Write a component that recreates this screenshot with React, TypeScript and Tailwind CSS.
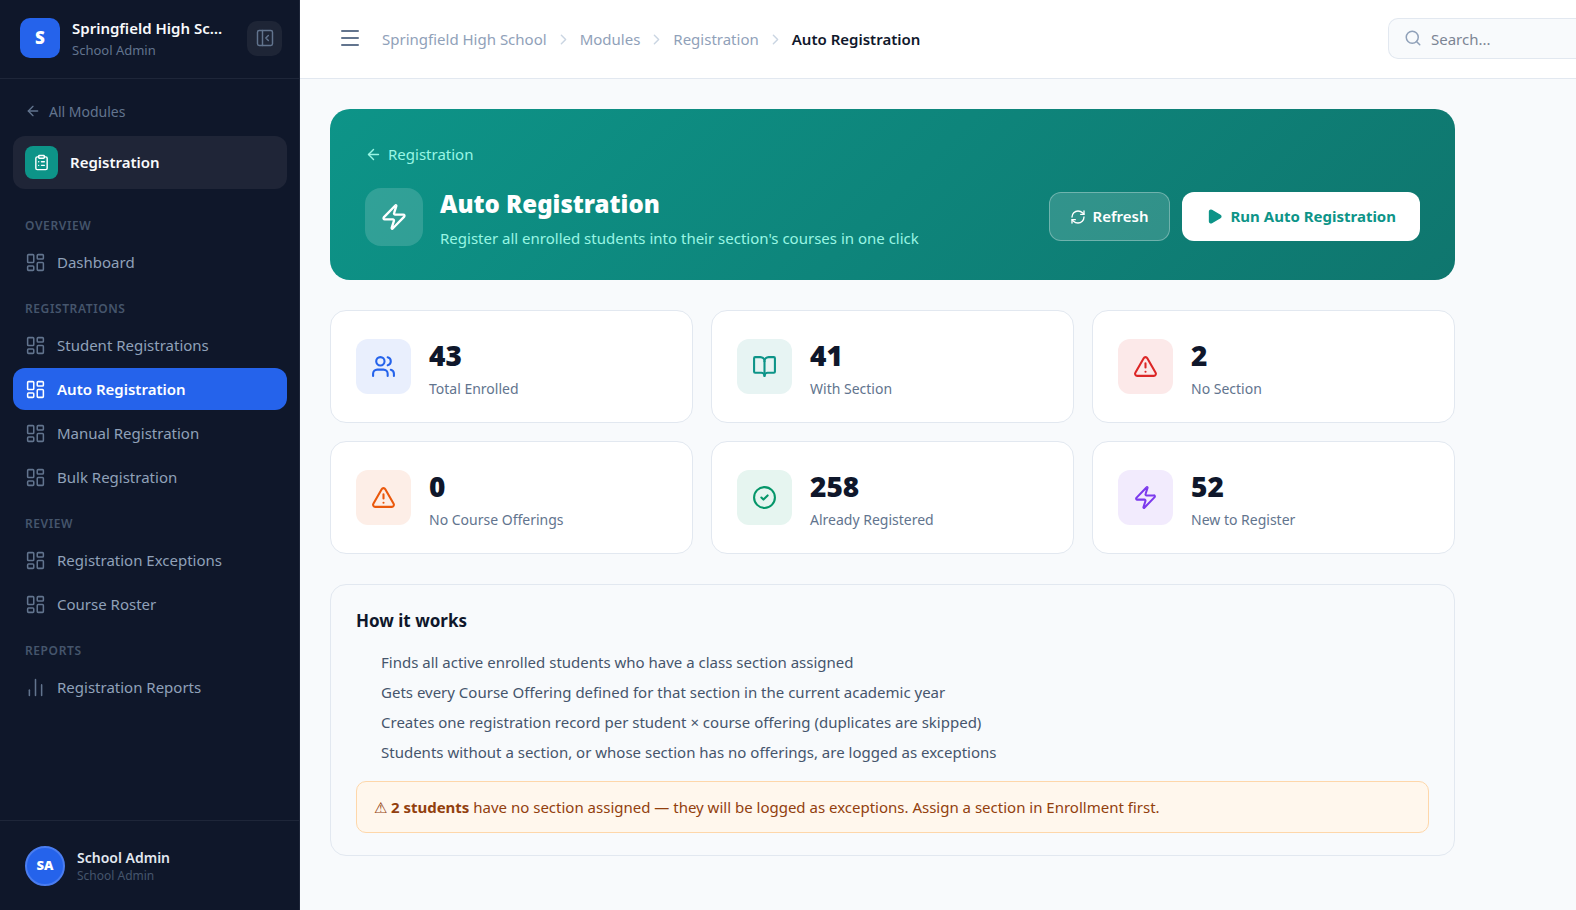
import {
  ArrowLeft,
  BookOpen,
  ChartNoAxesColumn,
  ChevronRight,
  CircleCheck,
  ClipboardList,
  LayoutDashboard,
  Menu,
  PanelLeftClose,
  Play,
  RefreshCw,
  Search,
  TriangleAlert,
  Users,
  Zap,
} from "lucide-react";
import clsx from "clsx";

const sections = [
  { title: "Overview", items: [{ label: "Dashboard", icon: LayoutDashboard }] },
  {
    title: "Registrations",
    items: [
      { label: "Student Registrations", icon: LayoutDashboard },
      { label: "Auto Registration", icon: LayoutDashboard, active: true },
      { label: "Manual Registration", icon: LayoutDashboard },
      { label: "Bulk Registration", icon: LayoutDashboard },
    ],
  },
  {
    title: "Review",
    items: [
      { label: "Registration Exceptions", icon: LayoutDashboard },
      { label: "Course Roster", icon: LayoutDashboard },
    ],
  },
  { title: "Reports", items: [{ label: "Registration Reports", icon: ChartNoAxesColumn }] },
];

const stats = [
  { value: 43, label: "Total Enrolled", icon: Users, color: "bg-[#e9effd] text-[#2563eb]" },
  { value: 41, label: "With Section", icon: BookOpen, color: "bg-[#e7f4f3] text-[#0d9488]" },
  { value: 2, label: "No Section", icon: TriangleAlert, color: "bg-[#fce9e9] text-[#dc2626]" },
  { value: 0, label: "No Course Offerings", icon: TriangleAlert, color: "bg-[#fdeee7] text-[#ea580c]" },
  { value: 258, label: "Already Registered", icon: CircleCheck, color: "bg-[#e6f5f0] text-[#059669]" },
  { value: 52, label: "New to Register", icon: Zap, color: "bg-[#f2ebfd] text-[#7c3aed]" },
];

const steps = [
  "Finds all active enrolled students who have a class section assigned",
  "Gets every Course Offering defined for that section in the current academic year",
  "Creates one registration record per student × course offering (duplicates are skipped)",
  "Students without a section, or whose section has no offerings, are logged as exceptions",
];

function Sidebar() {
  return (
    <aside className="flex w-[300px] shrink-0 flex-col border-r border-[#1e2639] bg-[#0f172a]">
      <div className="flex h-[79px] shrink-0 items-center border-b border-[#1e2639] pr-[17px] pb-[2px] pl-5">
        <div className="flex size-10 shrink-0 items-center justify-center rounded-[10px] bg-[#2563eb] text-[17px] font-black text-white">
          S
        </div>
        <div className="ml-3 min-w-0 flex-1 pt-[2px]">
          <div className="truncate text-[15px] leading-[22px] font-semibold text-slate-50">Springfield High School</div>
          <div className="text-[13px] leading-[22px] text-slate-500">School Admin</div>
        </div>
        <button
          className="ml-4 flex size-[35px] items-center justify-center rounded-[10px] bg-[#1e2536] text-slate-500"
          aria-label="Collapse sidebar"
        >
          <PanelLeftClose size={20} strokeWidth={1.75} />
        </button>
      </div>

      <nav className="flex-1 pt-[22px] pr-3 pl-[13px]">
        <a href="#modules" className="flex h-5 items-center gap-2 px-3 text-[14px] text-slate-500">
          <ArrowLeft size={16} strokeWidth={2} />
          All Modules
        </a>
        <div className="mt-[15px] flex h-[53px] items-center gap-3 rounded-xl bg-[#1f2537] px-3">
          <span className="flex size-[33px] items-center justify-center rounded-lg bg-[#0d9488] text-white">
            <ClipboardList size={17} />
          </span>
          <span className="text-[15px] font-semibold text-slate-50">Registration</span>
        </div>

        <div className="mt-[11px]">
          {sections.map((section) => (
            <div key={section.title} className="pt-4">
              <h3 className="px-3 text-[12px] leading-5 font-semibold tracking-wider text-slate-600 uppercase">
                {section.title}
              </h3>
              <ul className="mt-[5px] flex flex-col gap-[2px]">
                {section.items.map(({ label, icon: Icon, active }: any) => (
                  <li key={label}>
                    <a
                      href="#item"
                      className={clsx(
                        "flex h-[42px] items-center gap-[11px] rounded-xl px-3 text-[15px]",
                        active ? "bg-[#2563eb] font-semibold text-white" : "text-slate-400"
                      )}
                    >
                      <Icon size={21} strokeWidth={1.75} className={active ? "text-white" : "text-slate-500"} />
                      {label}
                    </a>
                  </li>
                ))}
              </ul>
            </div>
          ))}
        </div>
      </nav>

      <div className="flex h-[90px] items-center gap-3 border-t border-[#1e2639] px-[25px]">
        <div className="flex size-10 items-center justify-center rounded-full border-2 border-[#4a7df0] bg-[#2563eb] text-[13px] font-black text-white">
          SA
        </div>
        <div>
          <div className="text-[14px] leading-5 font-semibold text-slate-200">School Admin</div>
          <div className="text-[12px] leading-4 text-slate-600">School Admin</div>
        </div>
      </div>
    </aside>
  );
}

function Topbar() {
  const crumbs = ["Springfield High School", "Modules", "Registration"];
  return (
    <header className="flex h-[79px] shrink-0 items-center border-b border-slate-200 bg-white pb-[2px] pl-[38px]">
      <button className="text-slate-500" aria-label="Toggle menu">
        <Menu size={24} />
      </button>
      <nav className="ml-5 flex items-center gap-2 pt-[2px] text-[15px] text-slate-400" aria-label="Breadcrumb">
        {crumbs.map((crumb) => (
          <span key={crumb} className="flex items-center gap-2">
            <a href="#crumb">{crumb}</a>
            <ChevronRight size={17} className="text-slate-300" />
          </span>
        ))}
        <span className="font-semibold text-slate-900">Auto Registration</span>
      </nav>
      {/* runs off the right edge */}
      <label className="ml-auto flex h-[41px] w-[188px] items-center gap-[9px] rounded-l-[10px] border border-r-0 border-slate-200 bg-slate-50 pl-[15px]">
        <Search size={18} className="shrink-0 text-slate-400" />
        <input
          type="text"
          placeholder="Search..."
          aria-label="Search"
          className="w-full min-w-0 bg-transparent pt-[2px] text-[15px] outline-none placeholder:text-[#7c8594]"
        />
      </label>
    </header>
  );
}

function Banner() {
  return (
    <section className="rounded-[20px] bg-[linear-gradient(135deg,#0d9488,#0f766e)] px-[35px] pt-[35px] pb-7">
      <a href="#registration" className="flex h-5 items-center gap-[6px] text-[15px] text-[#99f6e4]">
        <ArrowLeft size={17} />
        Registration
      </a>
      <div className="mt-6 flex items-start justify-between">
        <div className="flex items-start gap-[17px]">
          <div className="flex size-[58px] items-center justify-center rounded-2xl bg-white/15 text-white">
            <Zap size={28} />
          </div>
          <div className="flex flex-col gap-1">
            <h1 className="text-[24px] leading-8 font-black text-white">Auto Registration</h1>
            <p className="text-[15px] leading-7 text-[#99f6e4]">
              Register all enrolled students into their section's courses in one click
            </p>
          </div>
        </div>
        <div className="flex gap-3 pt-1">
          <button className="flex h-[49px] items-center gap-[7px] rounded-xl border border-white/30 bg-white/15 px-5 text-[15px] font-semibold text-white">
            <RefreshCw size={16} />
            Refresh
          </button>
          <button className="flex h-[49px] items-center gap-2 rounded-xl bg-white px-6 text-[15px] font-bold text-[#0d9488]">
            <Play size={17} fill="currentColor" />
            Run Auto Registration
          </button>
        </div>
      </div>
    </section>
  );
}

export default function App() {
  return (
    <div className="flex min-h-screen bg-slate-50 font-['Noto_Sans',sans-serif]">
      <Sidebar />
      <div className="flex min-w-0 flex-1 flex-col">
        <Topbar />
        <main className="w-full max-w-[1185px] p-[30px]">
          <Banner />

          <div className="mt-[30px] grid grid-cols-3 gap-[18px]">
            {stats.map(({ value, label, icon: Icon, color }) => (
              <div
                key={label}
                className="flex h-[113px] items-center gap-[18px] rounded-2xl border border-slate-200 bg-white px-[25px]"
              >
                <div className={clsx("flex size-[55px] items-center justify-center rounded-xl", color)}>
                  <Icon size={25} />
                </div>
                <div className="pt-1">
                  <div className="text-[28px] leading-9 font-black text-slate-900">{value}</div>
                  <div className="mt-1 text-[14px] leading-6 text-slate-500">{label}</div>
                </div>
              </div>
            ))}
          </div>

          <section className="mt-[30px] rounded-2xl border border-slate-200 bg-slate-50 px-[25px] pt-6 pb-[22px]">
            <h2 className="text-[17px] leading-6 font-bold text-slate-900">How it works</h2>
            <ol className="mt-[14px] pl-[25px] text-[15px] leading-[30px] text-slate-600">
              {steps.map((step) => (
                <li key={step}>{step}</li>
              ))}
            </ol>
            <p className="mt-[14px] rounded-[10px] border border-[#fed7aa] bg-[#fff7ed] px-[17px] py-[13px] text-[15px] leading-6 text-[#92400e]">
              ⚠ <strong className="font-bold">2 students</strong> have no section assigned — they will be logged as
              exceptions. Assign a section in Enrollment first.
            </p>
          </section>
        </main>
      </div>
    </div>
  );
}
